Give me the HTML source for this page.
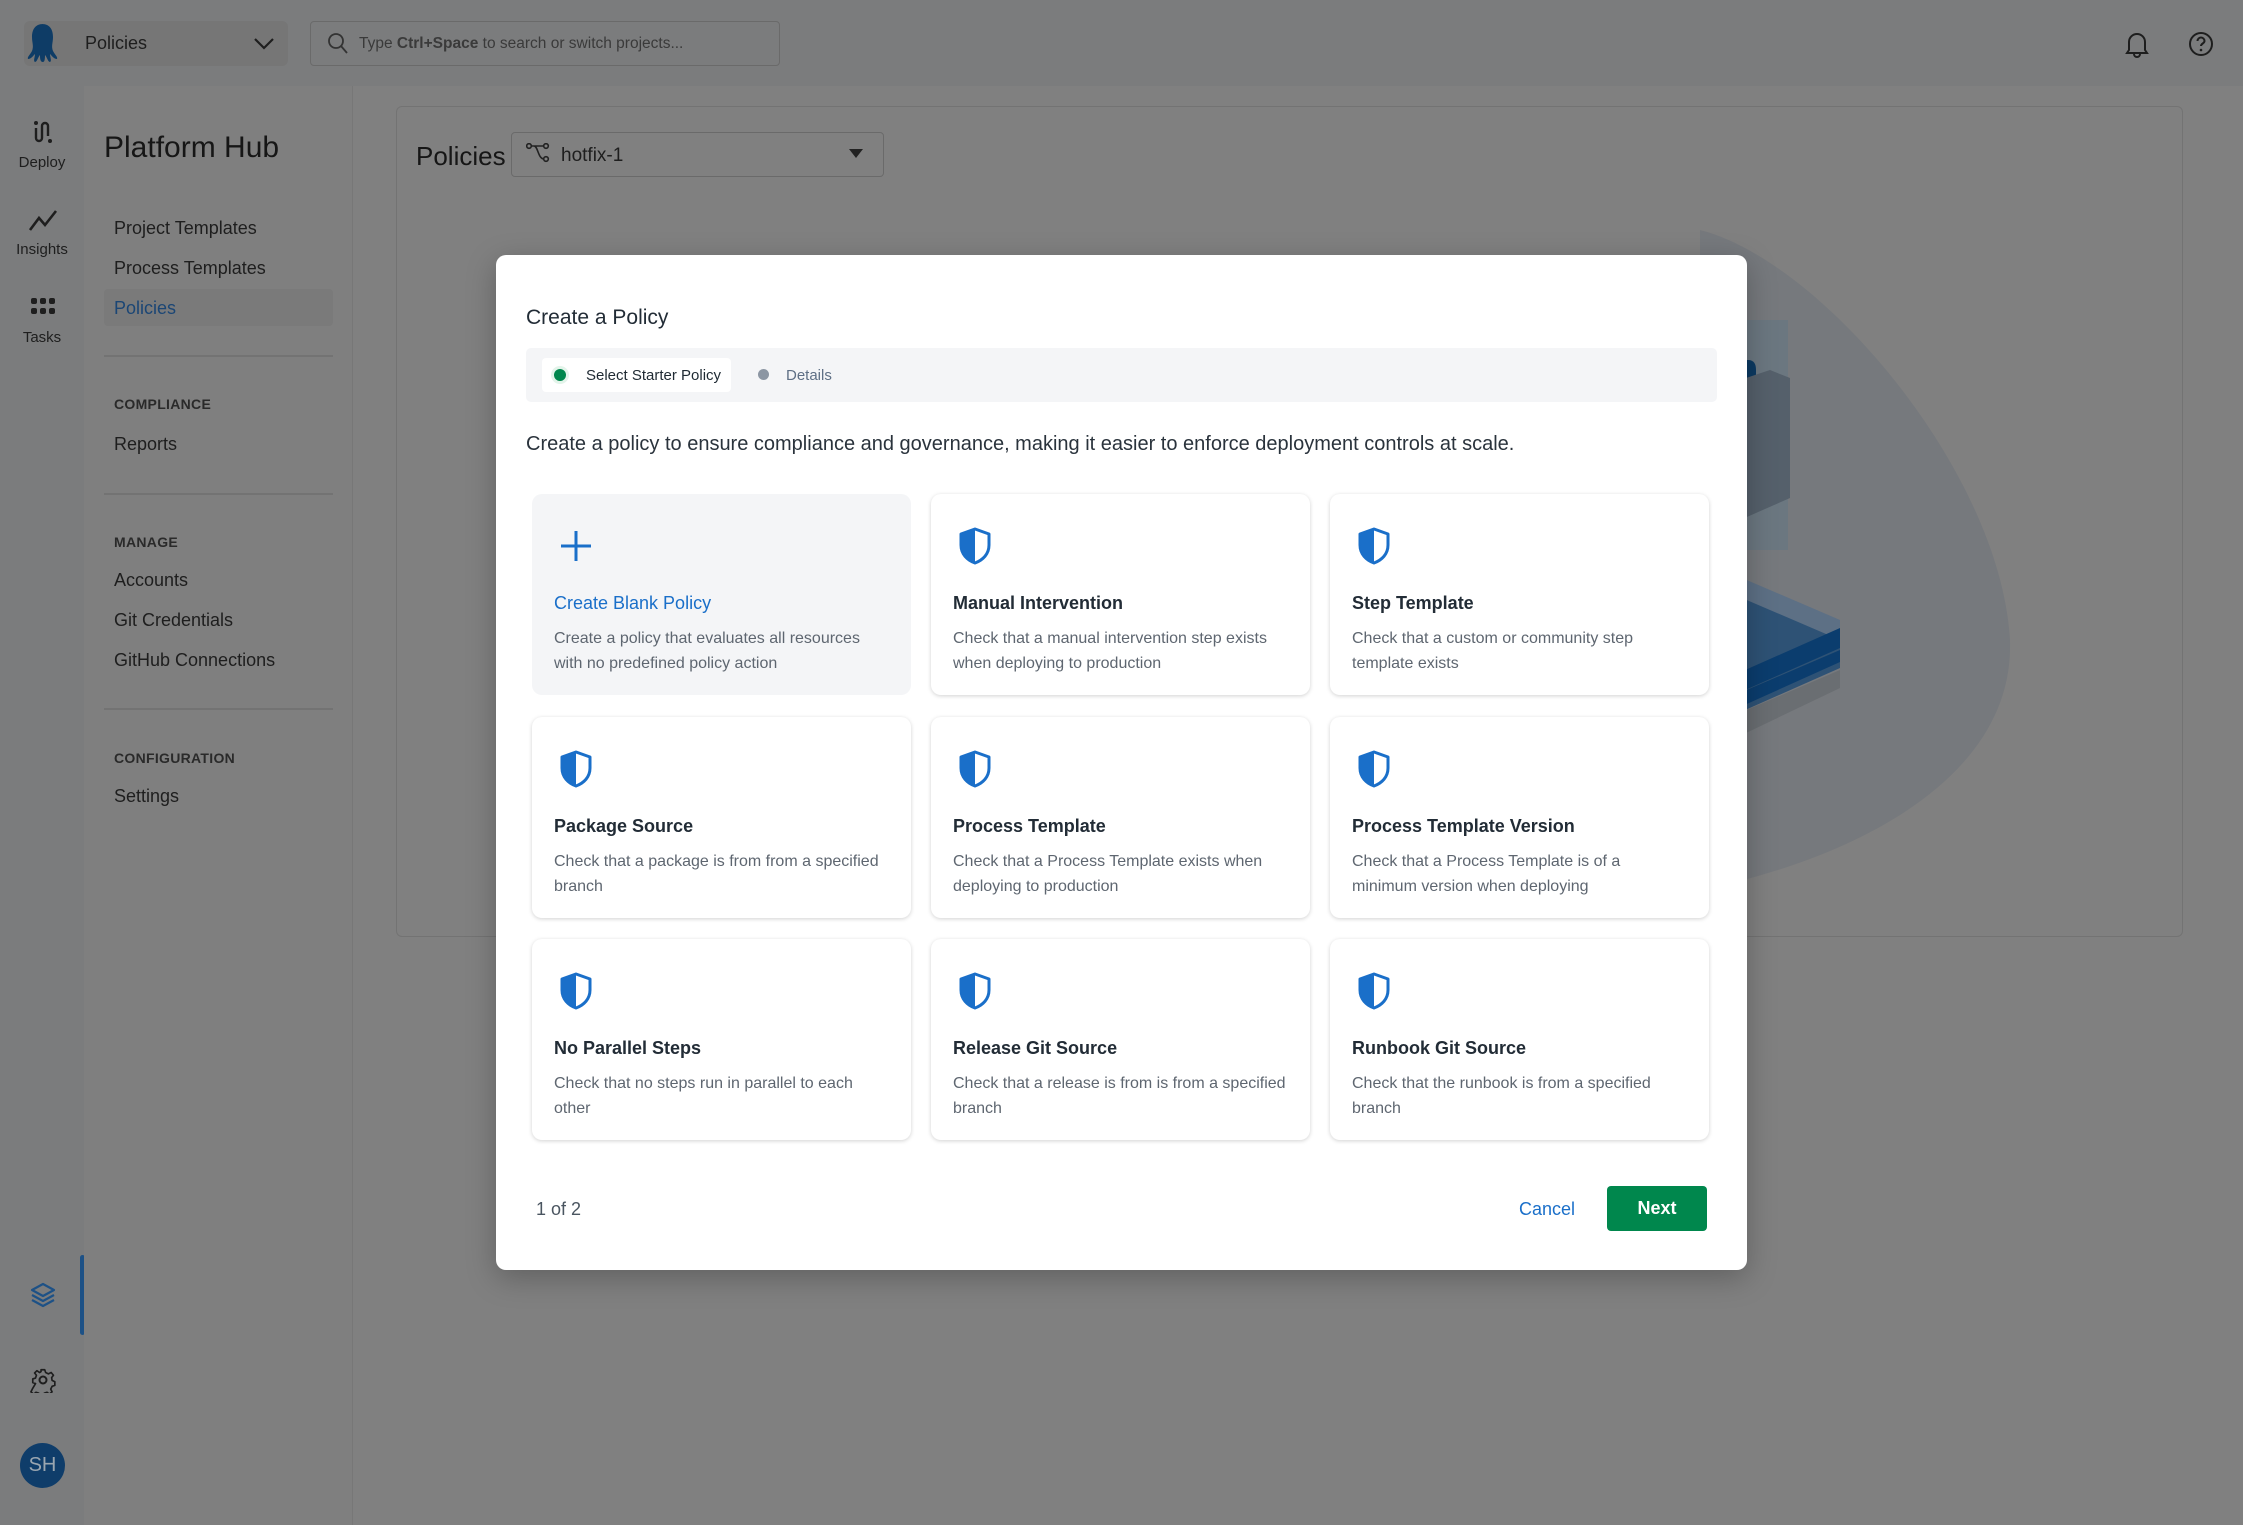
<!DOCTYPE html>
<html><head><meta charset="utf-8">
<style>
*{box-sizing:border-box;margin:0;padding:0}
body{width:2243px;height:1525px;overflow:hidden;background:#808080;font-family:"Liberation Sans",sans-serif;position:relative;color:#1b1b1b}
.abs{position:absolute}
.top{left:0;top:0;width:2243px;height:86px;background:#7b7c7d}
.rail{left:0;top:86px;width:84px;height:1439px;background:#7b7c7d}
.side{left:84px;top:86px;width:269px;height:1439px;background:#7f7f7f;border-right:1px solid #777}
.nav{position:absolute;left:114px;font-size:18px;color:#1e1e1e}
.sec{position:absolute;left:114px;font-size:14px;font-weight:bold;color:#2a2a2a;letter-spacing:.3px}
.div{position:absolute;left:104px;width:229px;height:2px;background:#737373}
.rl{position:absolute;width:84px;text-align:center;font-size:15px;color:#1e1e1e;left:0}
.modal{left:496px;top:255px;width:1251px;height:1015px;background:#fff;border-radius:10px;box-shadow:0 8px 30px rgba(0,0,0,.25)}
.card{position:absolute;width:379px;height:201px;background:#fff;border-radius:10px;box-shadow:0 1px 4px rgba(0,0,0,.18)}
.card svg{position:absolute;left:27px;top:33px}
.card h3{position:absolute;left:22px;top:99px;font-size:18px;font-weight:bold;color:#222c36}
.card p{position:absolute;left:22px;top:132px;width:322px;font-size:16px;line-height:25px;color:#5e6670}
.card p.w{width:345px}
</style></head><body>
<div class="abs top"></div>
<div class="abs" style="left:24px;top:21px;width:264px;height:45px;background:#767676;border-radius:6px"></div>
<svg class="abs" style="left:26px;top:22px" width="34" height="42" viewBox="0 0 34 42"><path d="M17 2C9 2 6 8 6 15c0 6 2 9 0 14-2 4-5 6-4 8 3 0 5-3 7-5 0 3-2 7 0 8 2 0 3-5 5-7 0 3 0 7 3 7 2 0 2-5 2-7 2 2 3 7 5 7 2-1 0-5 0-8 2 2 4 5 7 5 1-2-2-4-4-8-2-5 0-8 0-14 0-7-3-13-11-13z" fill="#0e3c66"/></svg>
<div class="abs" style="left:85px;top:33px;font-size:18px;color:#1e1e1e">Policies</div>
<svg class="abs" style="left:253px;top:37px" width="22" height="14" viewBox="0 0 22 14"><path d="M2 2l9 9 9-9" stroke="#1e1e1e" stroke-width="2.2" fill="none"/></svg>
<div class="abs" style="left:310px;top:21px;width:470px;height:45px;border:1.5px solid #6a6a6a;border-radius:4px"></div>
<svg class="abs" style="left:327px;top:32px" width="22" height="24" viewBox="0 0 22 24"><circle cx="9" cy="9" r="7" stroke="#333" stroke-width="1.8" fill="none"/><path d="M14 14l6 7" stroke="#333" stroke-width="1.8"/></svg>
<div class="abs" style="left:359px;top:35px;font-size:15.5px;color:#3a3a3a">Type <b>Ctrl+Space</b> to search or switch projects...</div>
<svg class="abs" style="left:2124px;top:30px" width="26" height="28" viewBox="0 0 26 28"><path d="M5 20V12a8 8 0 0116 0v8l2 3H3z M10 24a3 3 0 006 0" stroke="#1e1e1e" stroke-width="2" fill="none"/></svg>
<svg class="abs" style="left:2187px;top:30px" width="28" height="28" viewBox="0 0 28 28"><circle cx="14" cy="14" r="11" stroke="#1e1e1e" stroke-width="2" fill="none"/><path d="M10.5 11a3.5 3.5 0 117 0c0 2.5-3.5 2.5-3.5 5" stroke="#1e1e1e" stroke-width="2" fill="none"/><circle cx="14" cy="20" r="1.3" fill="#1e1e1e"/></svg>

<div class="abs rail"></div>
<svg class="abs" style="left:32px;top:119px" width="22" height="26" viewBox="0 0 22 26"><circle cx="4" cy="4" r="2" fill="#1e1e1e"/><circle cx="18" cy="22" r="2" fill="#1e1e1e"/><path d="M4 9v10a3 3 0 006 0V7a3 3 0 016 0v10" stroke="#1e1e1e" stroke-width="2.4" fill="none"/></svg>
<div class="rl" style="top:154px">Deploy</div>
<svg class="abs" style="left:28px;top:208px" width="30" height="24" viewBox="0 0 30 24"><path d="M2 22l9-12 6 7 11-14" stroke="#1e1e1e" stroke-width="2.6" fill="none"/></svg>
<div class="rl" style="top:241px">Insights</div>
<svg class="abs" style="left:31px;top:298px" width="24" height="18" viewBox="0 0 24 18"><g fill="#1e1e1e"><rect x="0" y="0" width="6" height="6" rx="2"/><rect x="9" y="0" width="6" height="6" rx="2"/><rect x="18" y="0" width="6" height="6" rx="2"/><rect x="0" y="10" width="6" height="6" rx="2"/><rect x="9" y="10" width="6" height="6" rx="2"/><rect x="18" y="10" width="6" height="6" rx="2"/></g></svg>
<div class="rl" style="top:329px">Tasks</div>
<div class="abs" style="left:80px;top:1255px;width:5px;height:80px;background:#1d5186;border-radius:3px"></div>
<svg class="abs" style="left:30px;top:1282px" width="26" height="26" viewBox="0 0 26 26"><path d="M13 2l11 6-11 6-11-6z M2 13l11 6 11-6 M2 18l11 6 11-6" stroke="#1d5186" stroke-width="2.2" fill="none" stroke-linejoin="round"/></svg>
<svg class="abs" style="left:30px;top:1367px" width="26" height="26" viewBox="0 0 26 26"><circle cx="13" cy="13" r="3.5" stroke="#1e1e1e" stroke-width="2" fill="none"/><path d="M11 2h4l1 3 3 1.5 3-1.5 2.5 3-2 2.5.5 3 3 1.5v4l-3 1-1.5 3 1.5 3-3 2.5-2.5-2-3 1-1 3h-4l-1-3-3-1-2.5 2-3-2.5 1.5-3L5 17l-3-1v-4l3-1 1-3-2-2.5L6.5 3 9.5 5 11 4z" stroke="#1e1e1e" stroke-width="1.8" fill="none" stroke-linejoin="round" transform="scale(.92) translate(1 1)"/></svg>
<div class="abs" style="left:20px;top:1443px;width:45px;height:45px;border-radius:50%;background:#0f3d6a;color:#9aa6b0;font-size:20px;text-align:center;line-height:45px">SH</div>

<div class="abs side"></div>
<div class="abs" style="left:104px;top:131px;font-size:30px;color:#161616">Platform Hub</div>
<div class="abs" style="left:104px;top:289px;width:229px;height:37px;background:#7a7a7a;border-radius:4px"></div>
<div class="nav" style="top:218px">Project Templates</div>
<div class="nav" style="top:258px">Process Templates</div>
<div class="nav" style="top:298px;color:#1b4675">Policies</div>
<div class="div" style="top:355px"></div>
<div class="sec" style="top:396px">COMPLIANCE</div>
<div class="nav" style="top:434px">Reports</div>
<div class="div" style="top:493px"></div>
<div class="sec" style="top:534px">MANAGE</div>
<div class="nav" style="top:570px">Accounts</div>
<div class="nav" style="top:610px">Git Credentials</div>
<div class="nav" style="top:650px">GitHub Connections</div>
<div class="div" style="top:708px"></div>
<div class="sec" style="top:750px">CONFIGURATION</div>
<div class="nav" style="top:786px">Settings</div>

<div class="abs" style="left:396px;top:106px;width:1787px;height:831px;border:1.5px solid #737373;border-radius:6px"></div>
<div class="abs" style="left:416px;top:141px;font-size:26px;color:#161616">Policies</div>
<div class="abs" style="left:511px;top:132px;width:373px;height:45px;border:1.5px solid #6a6a6a;border-radius:4px"></div>
<svg class="abs" style="left:526px;top:143px" width="24" height="20" viewBox="0 0 24 20"><circle cx="3" cy="3" r="2.3" stroke="#222" stroke-width="1.6" fill="none"/><circle cx="20" cy="3" r="2.3" stroke="#222" stroke-width="1.6" fill="none"/><circle cx="20" cy="16" r="2.3" stroke="#222" stroke-width="1.6" fill="none"/><path d="M5 3h3c4 0 4 13 10 13 M8 3h10" stroke="#222" stroke-width="1.6" fill="none"/></svg>
<div class="abs" style="left:561px;top:145px;font-size:19px;color:#1e1e1e">hotfix-1</div>
<svg class="abs" style="left:849px;top:149px" width="14" height="9" viewBox="0 0 14 9"><path d="M0 0h14L7 9z" fill="#222"/></svg>

<svg class="abs" style="left:1700px;top:220px" width="360" height="680" viewBox="0 0 360 680">
<path d="M0 10C120 40 300 250 310 420 315 560 150 640 0 670z" fill="#76797d"/>
<rect x="40" y="100" width="48" height="230" fill="#6b7780"/>
<path d="M20 140h28c6 0 8 4 8 10v100H20z" fill="#0c3a62"/>
<path d="M40 160l30-10 20 8v120l-50 22z" fill="#55606b"/>
<path d="M0 340l140 60v40L0 505z" fill="#5d7085"/>
<path d="M0 360l140 60v28L0 510z" fill="#2e5275"/>
<path d="M0 470l140-62v20L0 490z" fill="#0b3d6e"/>
<path d="M0 490l140-60v12L0 505z" fill="#0b3d6e"/>
<path d="M0 510l140-60v18L0 535z" fill="#6a6e72"/>
</svg>

<div class="abs modal">
<div class="abs" style="left:30px;top:51px;font-size:21px;color:#222c36">Create a Policy</div>
<div class="abs" style="left:30px;top:93px;width:1191px;height:54px;background:#f4f5f7;border-radius:5px"></div>
<div class="abs" style="left:46px;top:103px;width:189px;height:34px;background:#fff;border-radius:4px"></div>
<div class="abs" style="left:58px;top:114px;width:12px;height:12px;border-radius:50%;background:#00874d;box-shadow:0 0 0 3px #e3f4ea"></div>
<div class="abs" style="left:90px;top:112px;font-size:15px;color:#1f2a33">Select Starter Policy</div>
<div class="abs" style="left:262px;top:114px;width:11px;height:11px;border-radius:50%;background:#8c96a3"></div>
<div class="abs" style="left:290px;top:112px;font-size:15px;color:#5e6f85">Details</div>
<div class="abs" style="left:30px;top:178px;font-size:20px;color:#2a333c">Create a policy to ensure compliance and governance, making it easier to enforce deployment controls at scale.</div>

<div class="card" style="left:36px;top:239px;background:#f4f5f7;box-shadow:none">
<svg width="34" height="34" viewBox="0 0 34 34" style="left:27px;top:35px"><path d="M17 2v30M2 17h30" stroke="#1a6fc9" stroke-width="3"/></svg>
<h3 style="color:#1a6fc9;font-weight:normal">Create Blank Policy</h3>
<p>Create a policy that evaluates all resources with no predefined policy action</p></div>

<div class="card" style="left:435px;top:239px"><svg width="34" height="38" viewBox="0 0 34 38"><path d="M17 2L31 7v11c0 9-6 15-14 18C9 33 3 27 3 18V7z" stroke="#1a6fc9" stroke-width="3" fill="none" stroke-linejoin="round"/><path d="M17 2L3 7v11c0 9 6 15 14 18z" fill="#1a6fc9"/></svg><h3>Manual Intervention</h3><p>Check that a manual intervention step exists when deploying to production</p></div>
<div class="card" style="left:834px;top:239px"><svg width="34" height="38" viewBox="0 0 34 38"><path d="M17 2L31 7v11c0 9-6 15-14 18C9 33 3 27 3 18V7z" stroke="#1a6fc9" stroke-width="3" fill="none" stroke-linejoin="round"/><path d="M17 2L3 7v11c0 9 6 15 14 18z" fill="#1a6fc9"/></svg><h3>Step Template</h3><p>Check that a custom or community step template exists</p></div>

<div class="card" style="left:36px;top:462px"><svg width="34" height="38" viewBox="0 0 34 38"><path d="M17 2L31 7v11c0 9-6 15-14 18C9 33 3 27 3 18V7z" stroke="#1a6fc9" stroke-width="3" fill="none" stroke-linejoin="round"/><path d="M17 2L3 7v11c0 9 6 15 14 18z" fill="#1a6fc9"/></svg><h3>Package Source</h3><p class="w">Check that a package is from from a specified branch</p></div>
<div class="card" style="left:435px;top:462px"><svg width="34" height="38" viewBox="0 0 34 38"><path d="M17 2L31 7v11c0 9-6 15-14 18C9 33 3 27 3 18V7z" stroke="#1a6fc9" stroke-width="3" fill="none" stroke-linejoin="round"/><path d="M17 2L3 7v11c0 9 6 15 14 18z" fill="#1a6fc9"/></svg><h3>Process Template</h3><p>Check that a Process Template exists when deploying to production</p></div>
<div class="card" style="left:834px;top:462px"><svg width="34" height="38" viewBox="0 0 34 38"><path d="M17 2L31 7v11c0 9-6 15-14 18C9 33 3 27 3 18V7z" stroke="#1a6fc9" stroke-width="3" fill="none" stroke-linejoin="round"/><path d="M17 2L3 7v11c0 9 6 15 14 18z" fill="#1a6fc9"/></svg><h3>Process Template Version</h3><p>Check that a Process Template is of a minimum version when deploying</p></div>

<div class="card" style="left:36px;top:684px"><svg width="34" height="38" viewBox="0 0 34 38"><path d="M17 2L31 7v11c0 9-6 15-14 18C9 33 3 27 3 18V7z" stroke="#1a6fc9" stroke-width="3" fill="none" stroke-linejoin="round"/><path d="M17 2L3 7v11c0 9 6 15 14 18z" fill="#1a6fc9"/></svg><h3>No Parallel Steps</h3><p>Check that no steps run in parallel to each other</p></div>
<div class="card" style="left:435px;top:684px"><svg width="34" height="38" viewBox="0 0 34 38"><path d="M17 2L31 7v11c0 9-6 15-14 18C9 33 3 27 3 18V7z" stroke="#1a6fc9" stroke-width="3" fill="none" stroke-linejoin="round"/><path d="M17 2L3 7v11c0 9 6 15 14 18z" fill="#1a6fc9"/></svg><h3>Release Git Source</h3><p class="w">Check that a release is from is from a specified branch</p></div>
<div class="card" style="left:834px;top:684px"><svg width="34" height="38" viewBox="0 0 34 38"><path d="M17 2L31 7v11c0 9-6 15-14 18C9 33 3 27 3 18V7z" stroke="#1a6fc9" stroke-width="3" fill="none" stroke-linejoin="round"/><path d="M17 2L3 7v11c0 9 6 15 14 18z" fill="#1a6fc9"/></svg><h3>Runbook Git Source</h3><p>Check that the runbook is from a specified branch</p></div>

<div class="abs" style="left:40px;top:944px;font-size:18px;color:#4a5560">1 of 2</div>
<div class="abs" style="left:1023px;top:944px;font-size:18px;color:#1a6fc9">Cancel</div>
<div class="abs" style="left:1111px;top:931px;width:100px;height:45px;background:#00874d;border-radius:4px;color:#fff;font-size:18px;font-weight:bold;text-align:center;line-height:45px">Next</div>
</div>
</body></html>
